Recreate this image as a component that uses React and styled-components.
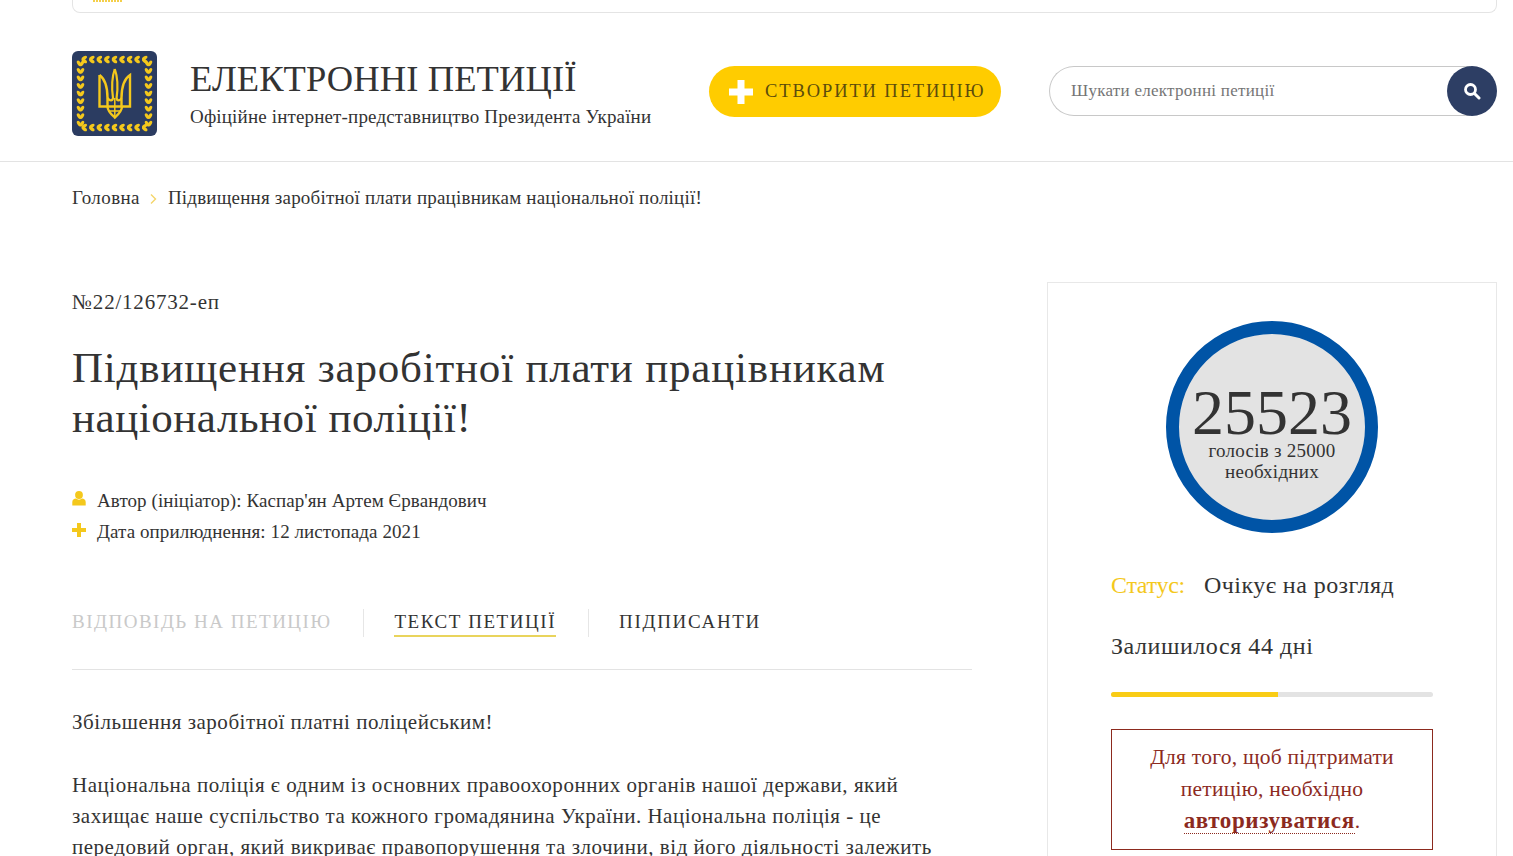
import React from "react";
import styled, { createGlobalStyle } from "styled-components";

const GlobalStyle = createGlobalStyle`
  html, body {
    margin: 0;
    height: 856px;
    overflow: hidden;
    background: #fff;
  }
  body {
    font-family: "Liberation Serif", "Times New Roman", serif;
    color: #333;
  }
`;

const GOLD = "#f4c81c";

function leafPositions() {
  const leaves = [];
  const min = 8.5, max = 76.5, count = 9;
  const step = (max - min) / count;
  for (let i = 0; i < count; i++) {
    const d = min + step * i + step / 2;
    [-32, 32].forEach((a, k) => {
      const off = k === 0 ? -1.5 : 1.5;
      leaves.push({ x: d, y: min + off, a });
      leaves.push({ x: d, y: max + off, a });
      leaves.push({ x: min + off, y: d, a: a + 90 });
      leaves.push({ x: max + off, y: d, a: a + 90 });
    });
  }
  return leaves;
}

function Logo() {
  return (
    <svg width="85" height="85" viewBox="0 0 85 85">
      <rect width="85" height="85" rx="6" fill="#2b3c61" />
      {leafPositions().map((l, i) => (
        <ellipse key={i} cx={l.x} cy={l.y} rx="3.1" ry="1.7" fill={GOLD} transform={`rotate(${l.a} ${l.x} ${l.y})`} />
      ))}
      <g fill="none" stroke={GOLD} strokeWidth="2.4">
        <path d="M27.5 24 V55.5 H58 V24 C52 28 49.5 37 49.5 47 V55" />
        <path d="M27.5 24 C33 28 35.5 37 35.5 47 V55" />
        <path d="M42.8 18 C39.6 27 39.6 37 41 47 C40.5 50 38 50.5 35.5 47" strokeWidth="2.2" />
        <path d="M42.8 18 C46 27 46 37 44.6 47 C45 50 47.5 50.5 49.5 47" strokeWidth="2.2" />
        <path d="M35.5 56 C36 61 39.5 63.5 42.8 66.5 C46 63.5 49.5 61 50 56" />
        <path d="M42.8 47 V66 M37 60 H48.5" strokeWidth="1.5" />
      </g>
    </svg>
  );
}

function PersonIcon() {
  return (
    <svg width="14" height="15" viewBox="0 0 14 15">
      <circle cx="7" cy="4" r="3.9" fill={GOLD} />
      <path d="M0.3 14.5 V11 C0.3 9 2 7.6 4 7.6 C5.5 9 8.5 9 10 7.6 C12 7.6 13.7 9 13.7 11 V14.5 Z" fill={GOLD} />
    </svg>
  );
}

const PlusSvg = styled.svg`
  flex: none;
  display: block;
`;

function PlusIcon({ size, bar, color }) {
  const p = (size - bar) / 2;
  return (
    <PlusSvg width={size} height={size} viewBox={`0 0 ${size} ${size}`}>
      <path
        d={`M${p} 0 H${p + bar} V${p} H${size} V${p + bar} H${p + bar} V${size} H${p} V${p + bar} H0 V${p} H${p} Z`}
        fill={color}
      />
    </PlusSvg>
  );
}

const Page = styled.div`
  width: 1513px;
  height: 856px;
  overflow: hidden;
`;

const TopStrip = styled.div`
  margin: 0 16px 0 72px;
  height: 13px;
  box-sizing: border-box;
  border: 1px solid #e4e4e4;
  border-top: none;
  border-radius: 0 0 8px 8px;
  padding-left: 20px;
`;

const StripMark = styled.div`
  width: 30px;
  height: 2px;
  background: repeating-linear-gradient(90deg, #f4cf4a 0 2px, #fff 2px 3px);
`;

const Header = styled.header`
  height: 149px;
  box-sizing: border-box;
  border-bottom: 1px solid #e3e3e3;
  padding: 38px 16px 0 72px;
  display: flex;
  align-items: flex-start;
`;

const LogoWrap = styled.div`
  width: 85px;
  height: 85px;
  flex: none;
  margin-right: 33px;
`;

const Brand = styled.div`
  width: 519px;
  flex: none;
  padding-top: 6px;
`;

const BrandTitle = styled.div`
  font-size: 36.5px;
  line-height: 44px;
  letter-spacing: 0.1px;
  white-space: nowrap;
`;

const BrandSub = styled.div`
  font-size: 19px;
  line-height: 24px;
  margin-top: 4px;
  letter-spacing: 0.16px;
  white-space: nowrap;
`;

const CreateButton = styled.button`
  width: 292px;
  height: 51px;
  margin-top: 15px;
  flex: none;
  border: none;
  border-radius: 26px;
  background: #ffcc00;
  padding: 0 0 0 20px;
  display: flex;
  align-items: center;
  gap: 12px;
  font-family: inherit;
  font-size: 18.5px;
  letter-spacing: 1.9px;
  color: #5c4c0c;
  white-space: nowrap;
`;

const Search = styled.div`
  margin: 15px 0 0 48px;
  width: 448px;
  flex: none;
  display: flex;
`;

const SearchInput = styled.div`
  flex: 1;
  height: 50px;
  box-sizing: border-box;
  border: 1px solid #c8c8c8;
  border-right: none;
  border-radius: 25px 0 0 25px;
  padding-left: 21px;
  display: flex;
  align-items: center;
  font-size: 17px;
  letter-spacing: 0.27px;
  color: #757575;
`;

const SearchButton = styled.div`
  width: 50px;
  height: 50px;
  flex: none;
  margin-left: -23px;
  border-radius: 50%;
  background: #2d3e64;
  display: flex;
  align-items: center;
  justify-content: center;
`;

const Crumbs = styled.nav`
  padding: 24px 0 0 72px;
  height: 120px;
  box-sizing: border-box;
  display: flex;
  align-items: flex-start;
  font-size: 19px;
  line-height: 24px;
  letter-spacing: 0.2px;
  white-space: nowrap;
`;

const CrumbHome = styled.span`
  letter-spacing: 0.4px;
`;

const CrumbSep = styled.svg`
  width: 7px;
  height: 10px;
  margin: 8px 11px 0 10px;
  flex: none;
`;

const Content = styled.main`
  display: flex;
  padding: 0 16px 0 72px;
  justify-content: space-between;
  align-items: flex-start;
`;

const Left = styled.section`
  width: 900px;
  flex: none;
`;

const PetNumber = styled.div`
  font-size: 21px;
  line-height: 24px;
  padding-top: 8px;
  letter-spacing: 0.8px;
`;

const Title = styled.h1`
  margin: 29px 0 0;
  font-weight: 400;
  font-size: 43px;
  line-height: 50px;
  white-space: nowrap;
`;

const TitleLine = styled.div`
  letter-spacing: ${(p) => p.$spacing}px;
`;

const Meta = styled.ul`
  list-style: none;
  margin: 42px 0 0;
  padding: 0;
`;

const MetaRow = styled.li`
  display: flex;
  align-items: center;
  gap: 11px;
  height: 31px;
  font-size: 19px;
  letter-spacing: 0.08px;
  white-space: nowrap;
`;

const MetaIcon = styled.span`
  width: 14px;
  height: 15px;
  display: flex;
  align-items: center;
  flex: none;
  margin-top: -4px;
`;

const Tabs = styled.div`
  display: flex;
  align-items: flex-start;
  margin-top: 61px;
  height: 62px;
  box-sizing: border-box;
  border-bottom: 1px solid #e3e3e3;
`;

const Tab = styled.div`
  font-size: 19px;
  line-height: 28px;
  height: 27px;
  letter-spacing: ${(p) => p.$spacing}px;
  color: ${(p) => (p.$muted ? "#c9c9c9" : "#333")};
  border-bottom: ${(p) => (p.$active ? "2px solid #e9d45c" : "2px solid transparent")};
  white-space: nowrap;
`;

const TabSep = styled.div`
  width: 1px;
  height: 28px;
  margin: 1px 30px 0 32px;
  background: #e6e6e6;
  flex: none;
`;

const Body = styled.div`
  font-size: 21px;
  line-height: 31px;
  letter-spacing: 0.52px;
  white-space: nowrap;
`;

const Para = styled.p`
  margin: 37px 0 0;
  & + & {
    margin-top: 32px;
  }
`;

const Side = styled.aside`
  width: 450px;
  flex: none;
  box-sizing: border-box;
  border: 1px solid #e8e8e8;
  padding: 38px 63px 40px;
  height: 640px;
`;

const Gauge = styled.div`
  width: 212px;
  height: 212px;
  box-sizing: border-box;
  margin: 0 auto;
  border: 13px solid #0054a6;
  border-radius: 50%;
  background: #e3e3e3;
  display: flex;
  flex-direction: column;
  align-items: center;
  text-align: center;
`;

const GaugeNumber = styled.div`
  font-size: 64px;
  line-height: 54px;
  margin-top: 52px;
`;

const GaugeText = styled.div`
  font-size: 19px;
  line-height: 21px;
  letter-spacing: 0.25px;
`;

const StatusRow = styled.div`
  display: flex;
  margin-top: 37px;
  font-size: 24px;
  line-height: 30px;
  letter-spacing: 0.45px;
  white-space: nowrap;
`;

const StatusLabel = styled.span`
  color: ${GOLD};
  width: 93px;
  flex: none;
  letter-spacing: -0.3px;
`;

const Remaining = styled.div`
  margin-top: 31px;
  font-size: 24px;
  line-height: 30px;
  letter-spacing: 0.55px;
  white-space: nowrap;
`;

const Progress = styled.div`
  margin-top: 31px;
  height: 5px;
  border-radius: 3px;
  background: #e3e3e3;
  overflow: hidden;
`;

const ProgressFill = styled.div`
  height: 100%;
  background: #f9cc15;
`;

const Notice = styled.div`
  margin-top: 32px;
  box-sizing: border-box;
  height: 121px;
  border: 1px solid #8c2a1e;
  padding: 11px 0;
  color: #8c2a1e;
  font-size: 21.5px;
  line-height: 32px;
  letter-spacing: 0.25px;
  text-align: center;
`;

const NoticeLink = styled.a`
  font-weight: 700;
  font-size: 23px;
  letter-spacing: 0.6px;
  border-bottom: 1px dotted #8c2a1e;
`;

export default function App() {
  return (
    <Page>
      <GlobalStyle />
      <TopStrip>
        <StripMark />
      </TopStrip>
      <Header>
        <LogoWrap>
          <Logo />
        </LogoWrap>
        <Brand>
          <BrandTitle>ЕЛЕКТРОННІ ПЕТИЦІЇ</BrandTitle>
          <BrandSub>Офіційне інтернет-представництво Президента України</BrandSub>
        </Brand>
        <CreateButton>
          <PlusIcon size={24} bar={7} color="#fff" />
          СТВОРИТИ ПЕТИЦІЮ
        </CreateButton>
        <Search>
          <SearchInput>Шукати електронні петиції</SearchInput>
          <SearchButton>
            <svg width="18" height="18" viewBox="0 0 18 18" fill="none" stroke="#fff">
              <circle cx="7.5" cy="7.5" r="5" strokeWidth="2.8" />
              <path d="M11.5 11.5 L16 16" strokeWidth="3" strokeLinecap="round" />
            </svg>
          </SearchButton>
        </Search>
      </Header>

      <Crumbs>
        <CrumbHome>Головна</CrumbHome>
        <CrumbSep viewBox="0 0 7 10" fill="none" stroke="#f4d56a" strokeWidth="1.4">
          <path d="M1 0.5 L5.5 5 L1 9.5" />
        </CrumbSep>
        Підвищення заробітної плати працівникам національної поліції!
      </Crumbs>

      <Content>
        <Left>
          <PetNumber>№22/126732-еп</PetNumber>
          <Title>
            <TitleLine $spacing={0.8}>Підвищення заробітної плати працівникам</TitleLine>
            <TitleLine $spacing={0.55}>національної поліції!</TitleLine>
          </Title>
          <Meta>
            <MetaRow>
              <MetaIcon>
                <PersonIcon />
              </MetaIcon>
              Автор (ініціатор): Каспар'ян Артем Єрвандович
            </MetaRow>
            <MetaRow>
              <MetaIcon>
                <PlusIcon size={14} bar={4} color={GOLD} />
              </MetaIcon>
              Дата оприлюднення: 12 листопада 2021
            </MetaRow>
          </Meta>
          <Tabs>
            <Tab $muted $spacing={1.5}>ВІДПОВІДЬ НА ПЕТИЦІЮ</Tab>
            <TabSep />
            <Tab $active $spacing={1.55}>ТЕКСТ ПЕТИЦІЇ</Tab>
            <TabSep />
            <Tab $spacing={1.7}>ПІДПИСАНТИ</Tab>
          </Tabs>
          <Body>
            <Para>Збільшення заробітної платні поліцейським!</Para>
            <Para>
              Національна поліція є одним із основних правоохоронних органів нашої держави, який
              <br />
              захищає наше суспільство та кожного громадянина України. Національна поліція - це
              <br />
              передовий орган, який викриває правопорушення та злочини, від його діяльності залежить
            </Para>
          </Body>
        </Left>
        <Side>
          <Gauge>
            <GaugeNumber>25523</GaugeNumber>
            <GaugeText>
              голосів з 25000
              <br />
              необхідних
            </GaugeText>
          </Gauge>
          <StatusRow>
            <StatusLabel>Статус:</StatusLabel>
            Очікує на розгляд
          </StatusRow>
          <Remaining>Залишилося 44 дні</Remaining>
          <Progress>
            <ProgressFill style={{ width: "52%" }} />
          </Progress>
          <Notice>
            Для того, щоб підтримати
            <br />
            петицію, необхідно
            <br />
            <NoticeLink>авторизуватися</NoticeLink>.
          </Notice>
        </Side>
      </Content>
    </Page>
  );
}
